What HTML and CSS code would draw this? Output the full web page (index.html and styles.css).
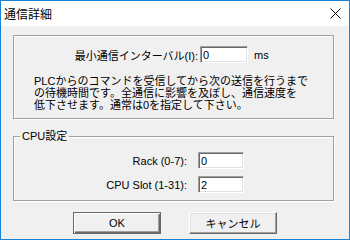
FILE: index.html
```html
<!DOCTYPE html>
<html>
    <head>
        <title>通信詳細</title>
        <link rel="stylesheet" href="styles.css">
    </head>
    <body>

        <div class="dialog">
            <div class="titlebar">
                <span class="title">通信詳細</span>
                <span class="close">
                    <svg width="11" height="11" viewBox="0 0 11 11">
                        <path d="M0.5 0.5 L10.5 10.5 M10.5 0.5 L0.5 10.5" stroke="#000" stroke-width="1" fill="none"/>
                    </svg>
                </span>
            </div>

            <div class="client">
                <fieldset class="group group-interval">
                    <div class="row">
                        <label class="label label-interval" for="interval">最小通信インターバル(I):</label>
                        <input class="edit edit-interval" id="interval" value="0">
                        <span class="unit">ms</span>
                    </div>
                    <p class="note">PLCからのコマンドを受信してから次の送信を行うまで<br>の待機時間です。全通信に影響を及ぼし、通信速度を<br>低下させます。通常は0を指定して下さい。</p>
                </fieldset>

                <fieldset class="group group-cpu">
                    <legend>CPU設定</legend>
                    <div class="row">
                        <label class="label label-cpu" for="rack">Rack (0-7):</label>
                        <input class="edit edit-cpu" id="rack" value="0">
                    </div>
                    <div class="row">
                        <label class="label label-cpu" for="slot">CPU Slot (1-31):</label>
                        <input class="edit edit-cpu" id="slot" value="2">
                    </div>
                </fieldset>

                <div class="buttons">
                    <button class="btn btn-default">OK</button>
                    <button class="btn">キャンセル</button>
                </div>
            </div>
        </div>

    </body>
</html>
```

FILE: styles.css
```css
body{
    margin: 0;
    padding: 0;
    font-family: "Liberation Sans", "Noto Sans CJK JP", sans-serif;
    font-size: 11px;
    font-weight: 400;
    color: #000;
}

.dialog{
    width: 350px;
    height: 240px;
    box-sizing: border-box;
    border: 1px solid #1883d7;
    background-color: #f0f0f0;
}

.titlebar{
    height: 25px;
    background-color: #fff;

    display: flex;
    align-items: center;
    justify-content: space-between;
}

.titlebar .title{
    font-family: "Noto Sans CJK JP", sans-serif;
    font-size: 12px;
    padding-left: 3px;
    line-height: 14px;
}

.titlebar .close{
    width: 28px;
    display: flex;
    justify-content: center;
}

.group{
    margin: 0 15px 0 12px;
    padding: 0;
    min-width: 0;
    border: 1px solid #a0a0a0;
    box-shadow: 1px 1px 0 #fff, inset 1px 1px 0 #fff;
}

.group legend{
    margin-left: 6px;
    padding: 0 2px;
    line-height: 12px;
    background-color: #f0f0f0;
}

.group-interval{
    margin-top: 9px;
    height: 84px;
    box-sizing: border-box;
    padding-top: 10px;
}

.group-cpu{
    margin-top: 11px;
    padding-top: 10px;
    padding-bottom: 7px;
}

.row{
    display: flex;
    align-items: center;
}

.group-cpu .row + .row{
    margin-top: 7px;
}

.label{
    text-align: right;
    white-space: nowrap;
}

.label-interval{
    width: 184px;
    margin-right: 2px;
}

.label-cpu{
    width: 173px;
    margin-right: 11px;
}

.edit{
    height: 17px;
    box-sizing: border-box;
    padding: 0 2px;
    margin: 0;
    font-family: "Liberation Sans", "Noto Sans CJK JP", sans-serif;
    font-size: 11px;
    color: #000;
    background-color: #fff;

    border: 1px solid;
    border-color: #a0a0a0 #fff #fff #a0a0a0;
    box-shadow: inset 1px 1px 0 #696969, inset -1px -1px 0 #e3e3e3;
    outline: none;
}

.edit-interval{
    width: 48px;
}

.edit-cpu{
    width: 46px;
}

.unit{
    margin-left: 6px;
}

.note{
    margin: 12px 0 0 20px;
    line-height: 12px;
    white-space: nowrap;
}

.buttons{
    margin-top: 11px;
    display: flex;
    justify-content: center;
    gap: 28px;
}

.btn{
    width: 88px;
    height: 22px;
    padding: 0;
    margin: 0;
    font-family: "Liberation Sans", "Noto Sans CJK JP", sans-serif;
    font-size: 11px;
    font-weight: 400;
    color: #000;
    background-color: #f0f0f0;

    border: 1px solid;
    border-color: #fff #696969 #696969 #fff;
    box-shadow: inset -1px -1px 0 #a0a0a0, inset 1px 1px 0 #e3e3e3;
}

.btn-default{
    border-color: #696969;
    box-shadow: inset 1px 1px 0 #fff, inset -1px -1px 0 #696969, inset -2px -2px 0 #a0a0a0;
}
```
